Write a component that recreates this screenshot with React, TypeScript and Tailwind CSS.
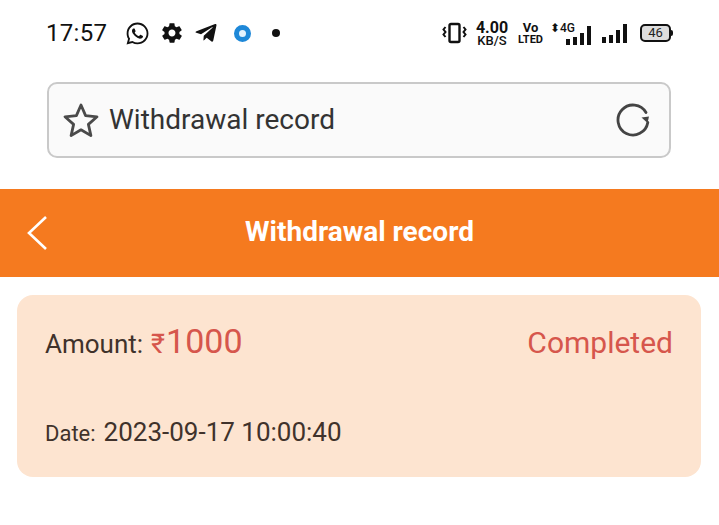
import { FaWhatsapp, FaTelegramPlane } from "react-icons/fa";
import { IoMdSettings } from "react-icons/io";

function VibrateIcon() {
  return (
    <svg width="25" height="22" viewBox="0 0 25 22" fill="none" stroke="#111" strokeWidth="2.4">
      <rect x="7.5" y="2" width="10" height="18" rx="1.5" />
      <path d="M3.5 5 L1.5 7.5 L3.5 10 L1.5 12.5 L3.5 15 M21.5 5 L23.5 7.5 L21.5 10 L23.5 12.5 L21.5 15" strokeWidth="2" />
    </svg>
  );
}

function SignalBars({ heights }: { heights: number[] }) {
  return (
    <div className="flex items-end gap-[3px] h-[20px]">
      {heights.map((h, i) => (
        <div key={i} className="w-[4px] bg-[#111]" style={{ height: h }} />
      ))}
    </div>
  );
}

function StatusBar() {
  return (
    <div className="h-[66px] flex items-center justify-between pl-[46px] pr-[46px] bg-white text-[#111]">
      <div className="flex items-center">
        <span className="text-[24px] leading-none tracking-[0.3px] w-[79px]">17:57</span>
        <FaWhatsapp className="w-[25px] h-[25px] text-[#111]" />
        <IoMdSettings className="w-[24px] h-[24px] ml-[10px] text-[#111]" />
        <FaTelegramPlane className="w-[24px] h-[24px] ml-[10px] text-[#111]" />
        <div className="w-[17px] h-[17px] ml-[16px] rounded-full border-[5px] border-[#1e88d8] bg-[#e3f2fd]" />
        <div className="w-[8px] h-[8px] ml-[21px] rounded-full bg-[#111]" />
      </div>
      <div className="flex items-center">
        <VibrateIcon />
        <div className="flex flex-col items-center ml-[9px] mt-[2px] font-bold leading-none">
          <span className="text-[16px] leading-[14px]">4.00</span>
          <span className="text-[13px] leading-[12px] font-medium">KB/S</span>
        </div>
        <div className="flex flex-col items-center ml-[10px] mt-[2px] font-bold leading-none">
          <span className="text-[13px] leading-[12px]">Vo</span>
          <span className="text-[11px] leading-[12px]">LTED</span>
        </div>
        <div className="flex items-end ml-[7px] h-[24px]">
          <span className="text-[12px] leading-none font-medium self-start mt-[1px] whitespace-nowrap -mr-[9px]">⬍4G</span>
          <SignalBars heights={[6, 8, 12, 19]} />
        </div>
        <div className="ml-[11px]">
          <SignalBars heights={[6, 8, 13, 19]} />
        </div>
        <div className="ml-[13px] flex items-center">
          <div className="w-[31px] h-[18px] rounded-[5px] border-[2px] border-[#111] bg-[#ddd] flex items-center justify-center text-[13px] text-[#222]">
            46
          </div>
          <div className="w-[2px] h-[6px] bg-[#111] rounded-r-sm" />
        </div>
      </div>
    </div>
  );
}

function AddressBar() {
  return (
    <div className="bg-white h-[123px] px-[47px] pt-[16px]">
      <div className="h-[76px] w-[624px] rounded-[10px] border-[2px] border-[#c9c9c9] bg-[#fafafa] flex items-center justify-between pl-[13px] pr-[18px]">
        <div className="flex items-center">
          <svg width="38" height="36" viewBox="0 0 38 36" fill="none" stroke="#4a4a4a" strokeWidth="2.8" strokeLinejoin="round">
            <path d="M19 3 L23.6 13.6 L35 14.8 L26.4 22.4 L28.9 33.6 L19 27.8 L9.1 33.6 L11.6 22.4 L3 14.8 L14.4 13.6 Z" />
          </svg>
          <span className="ml-[9px] text-[28px] leading-none text-[#333]">Withdrawal record</span>
        </div>
        <svg width="36" height="36" viewBox="0 0 36 36" fill="none">
          <path d="M32.8 20.5 A15 15 0 1 1 31 10.5" stroke="#444" strokeWidth="2.8" strokeLinecap="round" />
          <path d="M26.5 15.5 L34 14.5 L32.5 21 Z" fill="#444" />
        </svg>
      </div>
    </div>
  );
}

function Header() {
  return (
    <div className="h-[88px] bg-[#f57a1f] flex items-center relative">
      <svg className="absolute left-[25px] top-[26px]" width="24" height="36" viewBox="0 0 24 36" fill="none" stroke="#fff" strokeWidth="2.6">
        <path d="M21 2 L4 18 L21 34" />
      </svg>
      <h1 className="w-full text-center text-white text-[28px] font-bold leading-none -mt-[2px]">Withdrawal record</h1>
    </div>
  );
}

function RecordCard() {
  return (
    <div className="bg-[#fde4d0] rounded-[16px] mx-[17px] mt-[18px] h-[182px] w-[684px] pl-[28px] pr-[28px] pt-[21px] text-[#40322b]">
      <div className="flex items-baseline justify-between h-[40px]">
        <div className="flex items-baseline">
          <span className="text-[26px]">Amount:</span>
          <span className="ml-[8px] text-[27px] text-[#d6564c]">₹</span>
          <span className="ml-[1px] text-[34px] text-[#d6564c]">1000</span>
        </div>
        <span className="text-[30px] text-[#d6564c]">Completed</span>
      </div>
      <div className="flex items-baseline mt-[57px]">
        <span className="text-[22px]">Date:</span>
        <span className="ml-[8px] text-[26px]">2023-09-17 10:00:40</span>
      </div>
    </div>
  );
}

export default function App() {
  return (
    <div className="w-[719px] h-[525px] bg-white overflow-hidden font-['Roboto',sans-serif]">
      <StatusBar />
      <AddressBar />
      <Header />
      <RecordCard />
    </div>
  );
}
